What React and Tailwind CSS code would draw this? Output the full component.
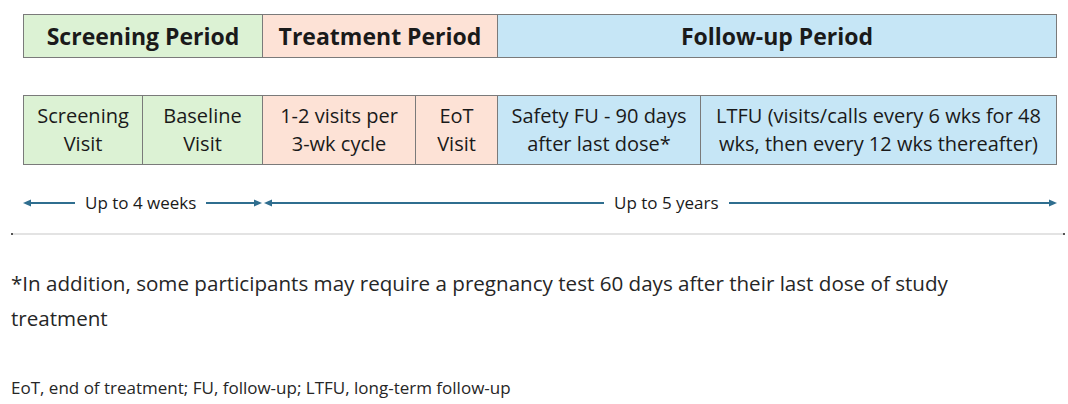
import React from "react";

const cell = "flex items-center justify-center text-center";

function Head({ dir }) {
  // small filled arrow head
  return (
    <svg width="8" height="8" viewBox="0 0 8 8" className="shrink-0">
      {dir === "left" ? (
        <polygon points="0,4 8,0.5 8,7.5" fill="#2f6e8f" />
      ) : (
        <polygon points="8,4 0,0.5 0,7.5" fill="#2f6e8f" />
      )}
    </svg>
  );
}

const Line = ({ className = "" }) => (
  <div className={`h-[2px] bg-[#2f6e8f] ${className}`} />
);

export default function App() {
  return (
    <div className="w-[1068px] h-[404px] bg-white text-[#1a1a1a] font-['Open_Sans',sans-serif] overflow-hidden">
      <div className="pl-[23px] pt-[14px]">
        {/* Period bars */}
        <div className="grid grid-cols-[240px_235px_559px] h-[44px] text-[23px] font-bold">
          <div className={`${cell} bg-[#dcf2d4] border border-[#7a7a7a]`}>
            Screening Period
          </div>
          <div className={`${cell} bg-[#fde2d6] border border-l-0 border-[#7a7a7a]`}>
            Treatment Period
          </div>
          <div className={`${cell} bg-[#c6e6f6] border border-l-0 border-[#7a7a7a]`}>
            Follow-up Period
          </div>
        </div>

        {/* Visits */}
        <div className="mt-[37px] grid grid-cols-[120px_120px_153px_82px_203px_356px] h-[70px] text-[20px] leading-[28px]">
          <div className={`${cell} bg-[#dcf2d4] border border-[#7a7a7a]`}>
            Screening
            <br />
            Visit
          </div>
          <div className={`${cell} bg-[#dcf2d4] border border-l-0 border-[#7a7a7a]`}>
            Baseline
            <br />
            Visit
          </div>
          <div className={`${cell} bg-[#fde2d6] border border-l-0 border-[#7a7a7a]`}>
            1-2 visits per
            <br />
            3-wk cycle
          </div>
          <div className={`${cell} bg-[#fde2d6] border border-l-0 border-[#7a7a7a]`}>
            EoT
            <br />
            Visit
          </div>
          <div className={`${cell} bg-[#c6e6f6] border border-l-0 border-[#7a7a7a]`}>
            Safety FU - 90 days
            <br />
            after last dose*
          </div>
          <div className={`${cell} bg-[#c6e6f6] border border-l-0 border-[#7a7a7a]`}>
            LTFU (visits/calls every 6 wks for 48
            <br />
            wks, then every 12 wks thereafter)
          </div>
        </div>

        {/* Timeline arrows */}
        <div className="mt-[28px] flex items-center h-[20px] text-[17px] w-[1034px]">
          <div className="flex items-center w-[240px] pr-[1px]">
            <Head dir="left" />
            <Line className="w-[44px]" />
            <span className="px-[10px] whitespace-nowrap">Up to 4 weeks</span>
            <Line className="flex-1" />
            <Head dir="right" />
          </div>
          <div className="flex items-center flex-1 pl-[1px]">
            <Head dir="left" />
            <Line className="w-[332px]" />
            <span className="px-[10px] whitespace-nowrap">Up to 5 years</span>
            <Line className="flex-1" />
            <Head dir="right" />
          </div>
        </div>
      </div>

      {/* separator */}
      <div className="mt-[20px] ml-[11px] w-[1054px] flex items-center">
        <div className="w-[2px] h-[2px] bg-[#555]" />
        <div className="flex-1 h-[2px] bg-[#e3e3e3]" />
        <div className="w-[2px] h-[2px] bg-[#555]" />
      </div>

      <p className="mt-[31px] px-[11px] text-[20.6px] leading-[35px] text-[#262626] w-[990px]">
        *In addition, some participants may require a pregnancy test 60 days after their last dose of study treatment
      </p>

      <p className="mt-[42px] px-[11px] text-[17px] leading-[20px] text-[#262626]">
        EoT, end of treatment; FU, follow-up; LTFU, long-term follow-up
      </p>
    </div>
  );
}
